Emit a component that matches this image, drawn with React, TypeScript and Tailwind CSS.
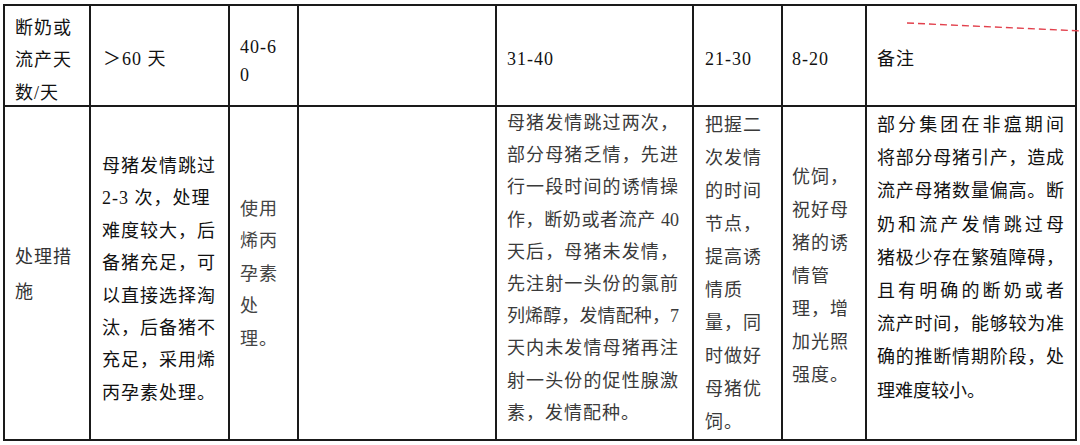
import React from "react";

type Line = { t: string; tight?: boolean };

const font = "font-['Liberation_Serif','Noto_Sans_CJK_SC',serif] text-[18px] tracking-[1px]";

function Lines({
  lines,
  lead,
  width,
  justify,
}: {
  lines: (string | Line)[];
  lead: string;
  width?: string;
  justify?: boolean;
}) {
  return (
    <div className={`${lead} ${width ?? ""}`}>
      {lines.map((l, i) => {
        const line = typeof l === "string" ? { t: l } : l;
        const last = i === lines.length - 1;
        return (
          <div
            key={i}
            className={`whitespace-nowrap ${line.tight ? "tracking-[0px]" : ""} ${
              justify && !last ? "text-justify [text-align-last:justify]" : ""
            }`}
          >
            {line.t}
          </div>
        );
      })}
    </div>
  );
}

function Cell({ className, children }: { className?: string; children?: React.ReactNode }) {
  return <div className={`flex flex-col bg-white ${className ?? ""}`}>{children}</div>;
}

export default function App() {
  return (
    <div className={`relative h-[445px] w-[1080px] overflow-hidden bg-white ${font}`}>
      <div className="ml-[3px] mt-[4px] grid w-max grid-cols-[84px_137px_67px_196px_195px_87px_82px_208px] grid-rows-[99px_332px] gap-[2px] border-2 border-[#1a1a1a] bg-[#1a1a1a]">
        {/* header row */}
        <Cell className="justify-center pl-[10px] pt-[10px] text-[#111]">
          <Lines lead="leading-[32.5px]" lines={["断奶或", "流产天", "数/天"]} />
        </Cell>
        <Cell className="justify-center pl-[12px] pt-[6px] text-[#111]">
          <Lines lead="leading-[32px]" lines={["＞60 天"]} />
        </Cell>
        <Cell className="justify-center pl-[10px] pt-[10px] text-[#111]">
          <Lines lead="leading-[28px]" lines={["40-6", "0"]} />
        </Cell>
        <Cell />
        <Cell className="justify-center pl-[10px] pt-[6px] text-[#111]">
          <Lines lead="leading-[32px]" lines={["31-40"]} />
        </Cell>
        <Cell className="justify-center pl-[11px] pt-[6px] text-[#111]">
          <Lines lead="leading-[32px]" lines={["21-30"]} />
        </Cell>
        <Cell className="justify-center pl-[9px] pt-[6px] text-[#111]">
          <Lines lead="leading-[32px]" lines={["8-20"]} />
        </Cell>
        <Cell className="justify-center pl-[10px] pt-[6px] text-[#111]">
          <Lines lead="leading-[32px]" lines={["备注"]} />
        </Cell>

        {/* body row */}
        <Cell className="justify-center pl-[10px] pt-[4px] text-[#333]">
          <Lines lead="leading-[35px]" lines={["处理措", "施"]} />
        </Cell>
        <Cell className="justify-center pl-[11px] pt-[13px] text-[#111]">
          <Lines
            lead="leading-[32.4px]"
            lines={[
              "母猪发情跳过",
              "2-3 次，处理",
              "难度较大，后",
              "备猪充足，可",
              "以直接选择淘",
              "汰，后备猪不",
              "充足，采用烯",
              "丙孕素处理。",
            ]}
          />
        </Cell>
        <Cell className="justify-center pl-[10px] pt-[2px] text-[#444]">
          <Lines lead="leading-[32.5px]" lines={["使用", "烯丙", "孕素", "处", "理。"]} />
        </Cell>
        <Cell />
        <Cell className="justify-start pl-[10px] pt-0 text-[#3a3a3a]">
          <Lines
            lead="leading-[32.2px]"
            width="w-[172px]"
            justify
            lines={[
              "母猪发情跳过两次，",
              "部分母猪乏情，先进",
              "行一段时间的诱情操",
              { t: "作，断奶或者流产 40", tight: true },
              "天后，母猪未发情，",
              "先注射一头份的氯前",
              { t: "列烯醇，发情配种，7", tight: true },
              "天内未发情母猪再注",
              "射一头份的促性腺激",
              "素，发情配种。",
            ]}
          />
        </Cell>
        <Cell className="justify-start pl-[11px] pt-[2px] text-[#3a3a3a]">
          <Lines
            lead="leading-[33px]"
            lines={["把握二", "次发情", "的时间", "节点，", "提高诱", "情质", "量，同", "时做好", "母猪优", "饲。"]}
          />
        </Cell>
        <Cell className="justify-center pl-[9px] pt-[6px] text-[#3a3a3a]">
          <Lines lead="leading-[33px]" lines={["优饲，", "祝好母", "猪的诱", "情管", "理，增", "加光照", "强度。"]} />
        </Cell>
        <Cell className="justify-start pl-[10px] pt-[2px] text-[#111]">
          <Lines
            lead="leading-[33.2px] tracking-[0px]"
            width="w-[187px]"
            justify
            lines={[
              "部分集团在非瘟期间",
              "将部分母猪引产，造成",
              "流产母猪数量偏高。断",
              "奶和流产发情跳过母",
              "猪极少存在繁殖障碍，",
              "且有明确的断奶或者",
              "流产时间，能够较为准",
              "确的推断情期阶段，处",
              "理难度较小。",
            ]}
          />
        </Cell>
      </div>

      {/* comment connector */}
      <svg className="pointer-events-none absolute left-0 top-0" width="1080" height="445">
        <line x1="907" y1="23" x2="1082" y2="31" stroke="#e2404c" strokeWidth="1.4" strokeDasharray="7 4" />
      </svg>
    </div>
  );
}
